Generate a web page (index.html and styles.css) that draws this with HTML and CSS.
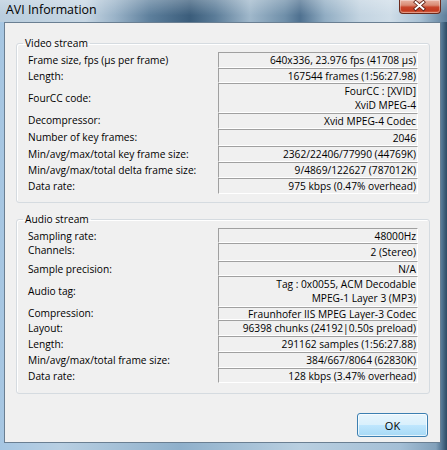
FILE: index.html
```html
<!DOCTYPE html>
<html>
<head>
<meta charset="utf-8">
<link rel="stylesheet" href="styles.css">
</head>
<body>
<div class="window">
  <div class="titlebar">
    <span class="title">AVI Information</span>
    <div class="close">
      <svg width="42" height="14" viewBox="0 0 42 14">
        <path d="M17 3 L25 10 M25 3 L17 10" stroke="#5a1d12" stroke-width="3.6" stroke-linecap="square" fill="none"/>
        <path d="M17 3 L25 10 M25 3 L17 10" stroke="#ffffff" stroke-width="2" stroke-linecap="square" fill="none"/>
      </svg>
    </div>
  </div>
  <div class="client">
    <fieldset class="group video">
      <legend>Video stream</legend>
      <div class="rows">
        <div class="row r16"><span class="label">Frame size, fps (µs per frame)</span><span class="value">640x336, 23.976 fps (41708 µs)</span></div>
        <div class="row r15"><span class="label">Length:</span><span class="value">167544 frames (1:56:27.98)</span></div>
        <div class="row r30"><span class="label">FourCC code:</span><span class="value multi">FourCC : [XVID]<br>XviD MPEG-4</span></div>
        <div class="row r16"><span class="label up">Decompressor:</span><span class="value">Xvid MPEG-4 Codec</span></div>
        <div class="row r17"><span class="label up">Number of key frames:</span><span class="value">2046</span></div>
        <div class="row r16"><span class="label">Min/avg/max/total key frame size:</span><span class="value">2362/22406/77990 (44769K)</span></div>
        <div class="row r16"><span class="label">Min/avg/max/total delta frame size:</span><span class="value">9/4869/122627 (787012K)</span></div>
        <div class="row r16"><span class="label">Data rate:</span><span class="value">975 kbps (0.47% overhead)</span></div>
      </div>
    </fieldset>
    <fieldset class="group audio">
      <legend>Audio stream</legend>
      <div class="rows">
        <div class="row r15"><span class="label">Sampling rate:</span><span class="value">48000Hz</span></div>
        <div class="row r18"><span class="label up2">Channels:</span><span class="value">2 (Stereo)</span></div>
        <div class="row r15"><span class="label">Sample precision:</span><span class="value">N/A</span></div>
        <div class="row r31"><span class="label up">Audio tag:</span><span class="value multi">Tag : 0x0055, ACM Decodable<br>MPEG-1 Layer 3 (MP3)</span></div>
        <div class="row r13"><span class="label up">Compression:</span><span class="value">Fraunhofer IIS MPEG Layer-3 Codec</span></div>
        <div class="row r16"><span class="label">Layout:</span><span class="value">96398 chunks (24192|0.50s preload)</span></div>
        <div class="row r16"><span class="label">Length:</span><span class="value">291162 samples (1:56:27.88)</span></div>
        <div class="row r16"><span class="label">Min/avg/max/total frame size:</span><span class="value">384/667/8064 (62830K)</span></div>
        <div class="row r15"><span class="label">Data rate:</span><span class="value">128 kbps (3.47% overhead)</span></div>
      </div>
    </fieldset>
    <div class="buttons"><button class="ok">OK</button></div>
  </div>
</div>
</body>
</html>
```
FILE: styles.css
```css
html, body {
  margin: 0;
  padding: 0;
  background: #ffffff;
}
.window {
  width: 447px;
  height: 450px;
  overflow: hidden;
  font-family: "Open Sans", "Liberation Sans", sans-serif;
  color: #000;
  background:
    linear-gradient(to right, rgba(0,0,0,0) 0, rgba(0,0,0,0) 436px, #5b7d9a 441px, #2c4a64 447px),
    linear-gradient(to right, #a6c6e2 0, #b8cfe2 60px, #8fb0cb 180px, #b9cfe0 300px, #a4bfd6 400px, #7d9cb6 441px);
}
.titlebar {
  height: 22px;
  display: flex;
  align-items: flex-start;
  background:
    linear-gradient(to bottom, rgba(255,255,255,0.25), rgba(255,255,255,0) 70%),
    linear-gradient(to right, #b9cddd 0, #c6d6e3 85px, #9ab3c8 115px, #5d7f9c 150px, #3b5d7b 190px, #5b7c98 215px, #a0b8cb 250px, #6f8fa9 285px, #4f7190 300px, #91adc3 325px, #c3d4e1 360px, #cfdde8 390px, #a9c1d4 420px, #5d7e9b 447px);
}
.title {
  font-size: 12.4px;
  line-height: 20px;
  padding-left: 6px;
  color: #000;
}
.close {
  margin-left: auto;
  margin-right: 6px;
  width: 42px;
  height: 14px;
  box-sizing: border-box;
  border: 1px solid #6b2a1c;
  border-top: none;
  border-radius: 0 0 4px 4px;
  background: linear-gradient(to bottom, #e9b4a4 0%, #d98b74 40%, #c8452b 55%, #c33b20 80%, #d96a4a 100%);
  box-shadow: inset 0 0 0 1px rgba(255,255,255,0.35);
  display: flex;
}
.close svg {
  margin: -1px 0 0 -1px;
}
.client {
  margin: 0 6px 0 4px;
  height: 421px;
  box-sizing: border-box;
  border: 1px solid #6a7f92;
  background: #f0f0f0;
  padding: 13px 10px 0 11px;
}
.group {
  margin: 0;
  padding: 1px 0 8px 0;
  border: 1px solid #d5dbe0;
  border-radius: 3px;
  box-shadow: inset 1px 1px 0 #fff;
}
.group.audio {
  margin-top: 9px;
  padding-bottom: 10px;
}
.group legend {
  font-size: 10.2px;
  line-height: 15px;
  padding: 0 2px;
  margin-left: 6px;
}
.rows {
  padding: 0 11px;
  display: flex;
  flex-direction: column;
}
.row {
  display: flex;
  align-items: stretch;
  font-size: 10.2px;
}
.r13 { height: 13px; }
.r15 { height: 15px; }
.r16 { height: 16px; }
.r17 { height: 17px; }
.r18 { height: 18px; }
.r30 { height: 30px; }
.r31 { height: 31px; }
.label {
  flex: 1;
  display: flex;
  align-items: center;
  white-space: nowrap;
}
.label.up { padding-bottom: 2px; }
.label.up2 { padding-bottom: 5px; }
.value {
  width: 200px;
  box-sizing: border-box;
  border-top: 1px solid #a0a0a0;
  border-left: 1px solid #a0a0a0;
  border-right: 1px solid #ffffff;
  border-bottom: 1px solid #ffffff;
  padding-right: 1px;
  display: flex;
  align-items: center;
  justify-content: flex-end;
  text-align: right;
  white-space: nowrap;
  line-height: 14px;
}
.value.multi {
  align-items: flex-start;
  padding-top: 0;
}
.buttons {
  display: flex;
  justify-content: flex-end;
  margin-top: 19px;
  padding-right: 2px;
}
.ok {
  width: 71px;
  height: 24px;
  box-sizing: border-box;
  border: 1px solid #3c7fb1;
  border-radius: 3px;
  background: linear-gradient(to bottom, #e8f5fc 0%, #d9f0fc 48%, #bee6fd 52%, #a7d9f5 100%);
  box-shadow: inset 0 0 0 1px rgba(255,255,255,0.7);
  font-family: "Open Sans", "Liberation Sans", sans-serif;
  font-size: 11px;
  color: #000;
  padding: 0;
}
```
